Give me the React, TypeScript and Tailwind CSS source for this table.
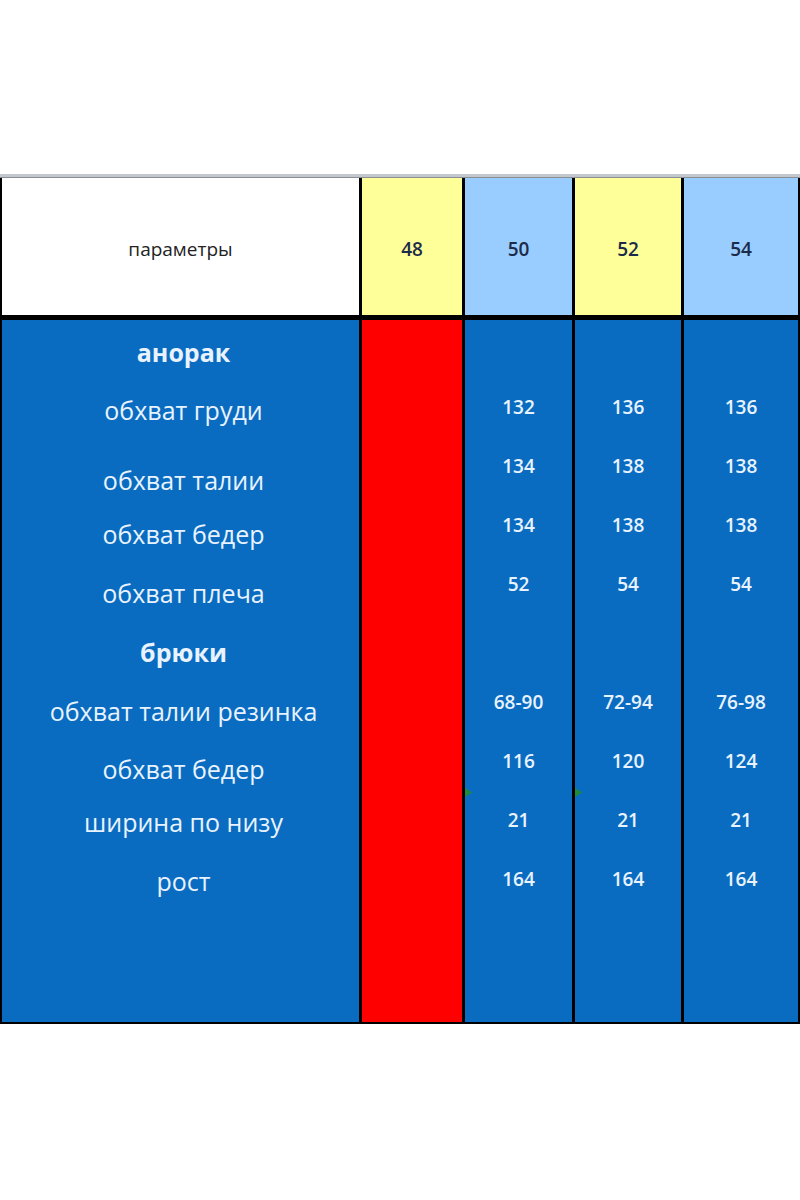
const labels = [
  { text: 'анорак', bold: true, mt: 'mt-[17px]' },
  { text: 'обхват груди', mt: 'mt-[28px]' },
  { text: 'обхват талии', mt: 'mt-[40px]' },
  { text: 'обхват бедер', mt: 'mt-[24px]' },
  { text: 'обхват плеча', mt: 'mt-[29px]' },
  { text: 'брюки', bold: true, mt: 'mt-[29px]' },
  { text: 'обхват талии резинка', mt: 'mt-[29px]' },
  { text: 'обхват бедер', mt: 'mt-[28px]' },
  { text: 'ширина по низу', mt: 'mt-[23px]' },
  { text: 'рост', mt: 'mt-[29px]' },
];

const sizes = [
  { head: '48', headBg: 'bg-[#ffff99]', bodyBg: 'bg-[#ff0000]', values: [] as string[], mark: false },
  { head: '50', headBg: 'bg-[#99ccff]', bodyBg: 'bg-[#0a6cc0]', values: ['132', '134', '134', '52', '', '68-90', '116', '21', '164'], mark: true },
  { head: '52', headBg: 'bg-[#ffff99]', bodyBg: 'bg-[#0a6cc0]', values: ['136', '138', '138', '54', '', '72-94', '120', '21', '164'], mark: true },
  { head: '54', headBg: 'bg-[#99ccff]', bodyBg: 'bg-[#0a6cc0]', values: ['136', '138', '138', '54', '', '76-98', '124', '21', '164'], mark: false },
];

function ErrorMark() {
  return (
    <svg className="absolute left-0 top-[468px]" width="7" height="9" viewBox="0 0 7 9">
      <polygon points="0,0 7,4.5 0,9" fill="#1f8a3a" />
    </svg>
  );
}

export default function App() {
  return (
    <div className="min-h-[1200px] bg-white pt-[174px]" style={{ fontFamily: '"Open Sans", "Noto Sans", sans-serif' }}>
      <div className="h-[3px] bg-[#c4c7cc]" />
      <div className="h-[1px] bg-[#8a8f96]" />
      <div className="grid grid-cols-[357px_100px_107px_106px_114px] grid-rows-[137px_702px] gap-x-[3px] gap-y-[5px] bg-black pl-[2px] pr-[3px] pb-[2px] w-[800px]">
        {/* header */}
        <div className="bg-white flex items-center justify-center pt-[5px] text-[19px] text-[#222]">
          параметры
        </div>
        {sizes.map((s) => (
          <div key={s.head} className={`${s.headBg} flex items-center justify-center pt-[5px] text-[19px] font-semibold text-[#1c2b4a]`}>
            {s.head}
          </div>
        ))}

        {/* body */}
        <div className="bg-[#0a6cc0] flex flex-col items-center text-[#e8f3ff] text-[25px] pl-[6px]">
          {labels.map((l, i) => (
            <div key={i} className={`${l.mt} h-[30px] leading-[30px] whitespace-nowrap ${l.bold ? 'font-bold' : ''}`}>
              {l.text}
            </div>
          ))}
        </div>
        {sizes.map((s) => (
          <div key={s.head} className={`${s.bodyBg} relative flex flex-col pt-[58px] text-[#e8f3ff] text-[19px] font-semibold`}>
            {s.values.map((v, i) => (
              <div key={i} className="h-[59px] flex items-center justify-center">
                {v}
              </div>
            ))}
            {s.mark && <ErrorMark />}
          </div>
        ))}
      </div>
    </div>
  );
}
